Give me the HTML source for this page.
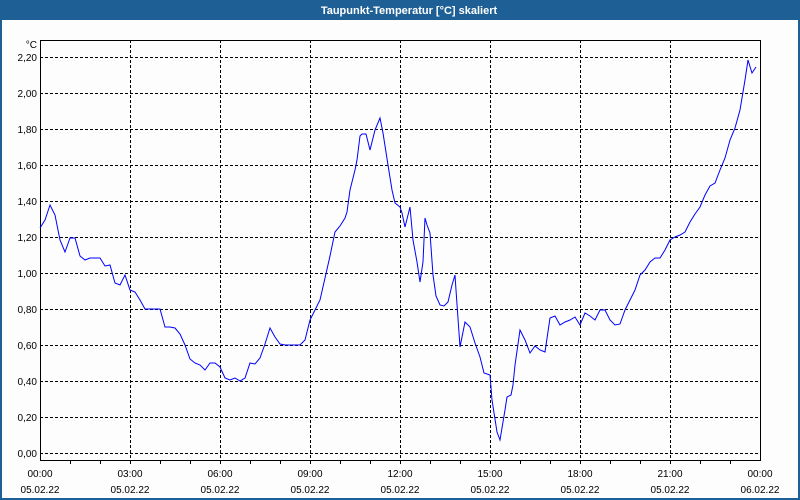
<!DOCTYPE html>
<html><head><meta charset="utf-8"><style>
html,body{margin:0;padding:0;}
body{width:800px;height:500px;overflow:hidden;background:#1e6096;font-family:"Liberation Sans",sans-serif;}
</style></head><body>
<svg width="800" height="500" xmlns="http://www.w3.org/2000/svg" style="position:absolute;left:0;top:0">
<rect x="0" y="0" width="800" height="500" fill="#1e6096"/>
<rect x="2" y="20" width="796" height="478" fill="#fcfdfc"/>
<text x="409" y="14" font-size="11" font-weight="bold" fill="#fff" text-anchor="middle" font-family="Liberation Sans, sans-serif">Taupunkt-Temperatur [°C] skaliert</text>
<g stroke="#000" stroke-width="1" stroke-dasharray="3,2" shape-rendering="crispEdges">
<line x1="40" x2="760" y1="57.5" y2="57.5"/><line x1="40" x2="760" y1="93.5" y2="93.5"/>
<line x1="40" x2="760" y1="129.5" y2="129.5"/><line x1="40" x2="760" y1="165.5" y2="165.5"/>
<line x1="40" x2="760" y1="201.5" y2="201.5"/><line x1="40" x2="760" y1="237.5" y2="237.5"/>
<line x1="40" x2="760" y1="273.5" y2="273.5"/><line x1="40" x2="760" y1="309.5" y2="309.5"/>
<line x1="40" x2="760" y1="345.5" y2="345.5"/><line x1="40" x2="760" y1="381.5" y2="381.5"/>
<line x1="40" x2="760" y1="417.5" y2="417.5"/><line x1="40" x2="760" y1="453.5" y2="453.5"/>
<line x1="130.5" x2="130.5" y1="40" y2="460"/><line x1="220.5" x2="220.5" y1="40" y2="460"/>
<line x1="310.5" x2="310.5" y1="40" y2="460"/><line x1="400.5" x2="400.5" y1="40" y2="460"/>
<line x1="490.5" x2="490.5" y1="40" y2="460"/><line x1="580.5" x2="580.5" y1="40" y2="460"/>
<line x1="670.5" x2="670.5" y1="40" y2="460"/>
</g>
<rect x="40.5" y="40.5" width="720" height="420" fill="none" stroke="#000" shape-rendering="crispEdges"/>
<g stroke="#000" shape-rendering="crispEdges">
<line x1="70.5" x2="70.5" y1="460" y2="464"/><line x1="100.5" x2="100.5" y1="460" y2="464"/><line x1="130.5" x2="130.5" y1="460" y2="464"/>
<line x1="160.5" x2="160.5" y1="460" y2="464"/><line x1="190.5" x2="190.5" y1="460" y2="464"/><line x1="220.5" x2="220.5" y1="460" y2="464"/>
<line x1="250.5" x2="250.5" y1="460" y2="464"/><line x1="280.5" x2="280.5" y1="460" y2="464"/><line x1="310.5" x2="310.5" y1="460" y2="464"/>
<line x1="340.5" x2="340.5" y1="460" y2="464"/><line x1="370.5" x2="370.5" y1="460" y2="464"/><line x1="400.5" x2="400.5" y1="460" y2="464"/>
<line x1="430.5" x2="430.5" y1="460" y2="464"/><line x1="460.5" x2="460.5" y1="460" y2="464"/><line x1="490.5" x2="490.5" y1="460" y2="464"/>
<line x1="520.5" x2="520.5" y1="460" y2="464"/><line x1="550.5" x2="550.5" y1="460" y2="464"/><line x1="580.5" x2="580.5" y1="460" y2="464"/>
<line x1="610.5" x2="610.5" y1="460" y2="464"/><line x1="640.5" x2="640.5" y1="460" y2="464"/><line x1="670.5" x2="670.5" y1="460" y2="464"/>
<line x1="700.5" x2="700.5" y1="460" y2="464"/><line x1="730.5" x2="730.5" y1="460" y2="464"/>
</g>
<g font-size="10" fill="#000" text-anchor="end" font-family="Liberation Sans, sans-serif">
<text x="37" y="48">°C</text>
<text x="37" y="61">2,20</text><text x="37" y="97">2,00</text><text x="37" y="133">1,80</text>
<text x="37" y="169">1,60</text><text x="37" y="205">1,40</text><text x="37" y="241">1,20</text>
<text x="37" y="277">1,00</text><text x="37" y="313">0,80</text><text x="37" y="349">0,60</text>
<text x="37" y="385">0,40</text><text x="37" y="421">0,20</text><text x="37" y="457">0,00</text>
</g>
<g font-size="10" fill="#000" text-anchor="middle" font-family="Liberation Sans, sans-serif">
<text x="40" y="477">00:00</text><text x="40" y="493">05.02.22</text>
<text x="130" y="477">03:00</text><text x="130" y="493">05.02.22</text>
<text x="220" y="477">06:00</text><text x="220" y="493">05.02.22</text>
<text x="310" y="477">09:00</text><text x="310" y="493">05.02.22</text>
<text x="400" y="477">12:00</text><text x="400" y="493">05.02.22</text>
<text x="490" y="477">15:00</text><text x="490" y="493">05.02.22</text>
<text x="580" y="477">18:00</text><text x="580" y="493">05.02.22</text>
<text x="670" y="477">21:00</text><text x="670" y="493">05.02.22</text>
<text x="760" y="477">00:00</text><text x="760" y="493">06.02.22</text>
</g>
<polyline fill="none" stroke="#0000ff" stroke-width="1" points="40,228 45,220 50,205 55,215 60,240 65,252 70,238 75,238 80,256 85,260 90,258 95,258 100,258 105,266 110,265 115,283 120,285 125,275 130,290 135,292 140,300 145,309 150,309 155,309 160,309 165,327 170,327 175,328 180,334 185,345 190,359 195,363 200,365 205,370 210,363 215,363 220,367 225,378 230,380 235,378 240,381 245,378 250,363 255,364 260,358 265,344 270,328 275,337 280,344 285,345 290,345 300,345 305,340 310,320 315,310 320,300 325,278 330,256 335,232 340,226 345,218 347,212 350,190 355,170 357,160 360,136 362,134 366,134 370,150 375,130 380,118 383,133 388,165 392,190 395,203 400,207 402,213 405,227 408,215 410,207 413,240 417,262 420,282 423,262 425,218 427,225 430,233 433,275 436,296 440,305 444,306 448,302 452,285 455,275 456,290 460,347 465,322 470,327 475,343 480,357 484,373 490,375 492,400 497,432 500,440 505,410 507,397 511,395 513,385 515,365 520,330 525,340 530,353 535,346 540,350 545,352 550,318 555,316 560,325 565,322 570,320 575,317 580,325 585,313 590,316 595,320 600,310 605,310 610,320 615,325 620,324 625,310 630,300 635,290 640,275 645,270 650,262 655,258 660,258 665,250 670,240 675,237 680,235 685,232 690,222 695,214 700,207 705,195 710,186 715,183 720,170 725,158 730,140 735,128 740,110 745,80 748,60 752,73 756,67"/>
</svg>
</body></html>
